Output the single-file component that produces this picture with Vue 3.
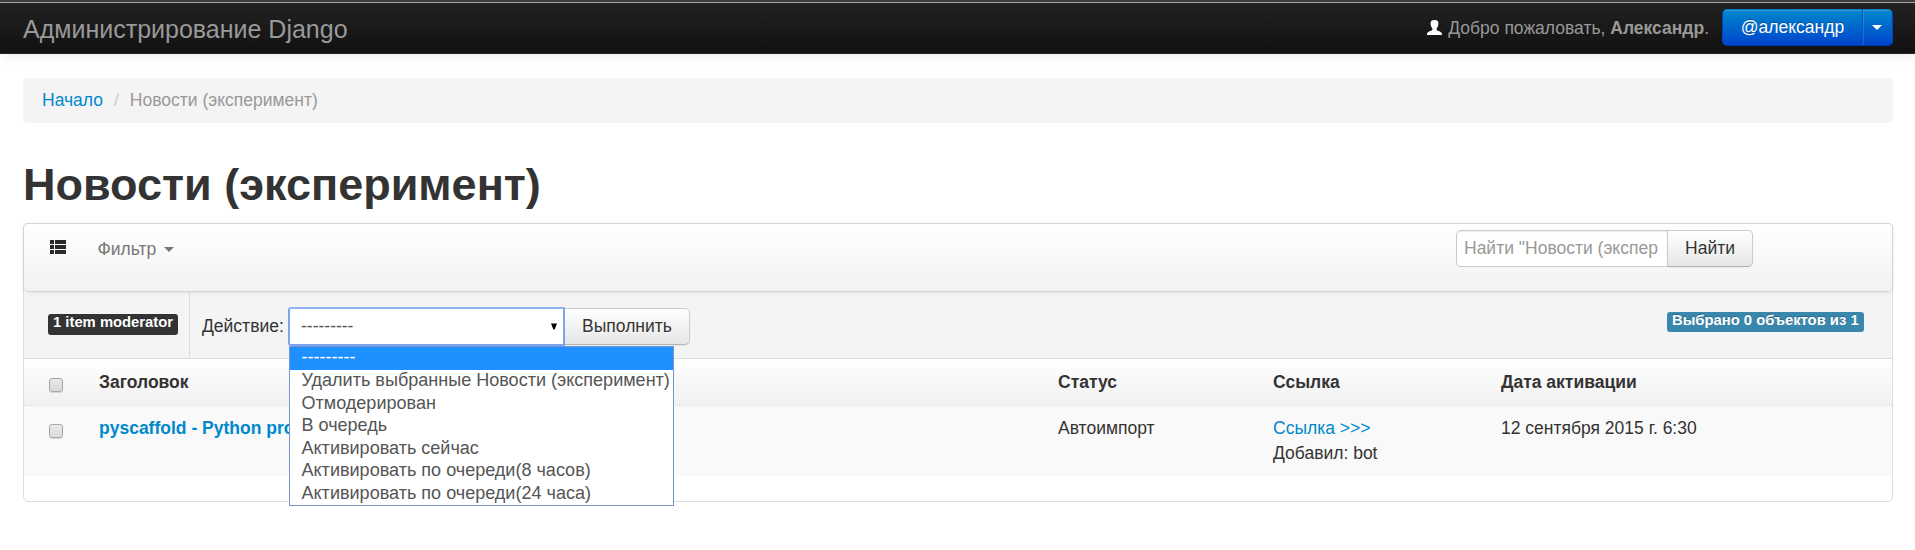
<script setup>
const options = [
  '---------',
  'Удалить выбранные Новости (эксперимент)',
  'Отмодерирован',
  'В очередь',
  'Активировать сейчас',
  'Активировать по очереди(8 часов)',
  'Активировать по очереди(24 часа)',
]
</script>

<template>
  <div class="page">
    <header class="topbar">
      <a class="brand">Администрирование Django</a>
      <div class="welcome">
        <svg class="user" width="15" height="15" viewBox="0 0 15 15"><path d="M7.5 0C10.6 0 11.7 1.6 11.4 4.2C11.2 6.2 10.4 7.5 9.6 8.4V9.8C10.2 11 12.8 11.2 14 12.2C14.8 12.8 15 13.6 15 15H0C0 13.6.2 12.8 1 12.2C2.2 11.2 4.8 11 5.4 9.8V8.4C4.6 7.5 3.8 6.2 3.6 4.2C3.3 1.6 4.4 0 7.5 0Z" fill="#fff"/></svg>
        <span>Добро пожаловать, <strong>Александр</strong>.</span>
      </div>
      <div class="account">
        <button class="primary name">@александр</button>
        <button class="primary toggle"><i class="caret"></i></button>
      </div>
    </header>

    <nav class="crumbs"><a>Начало</a><i>/</i><span>Новости (эксперимент)</span></nav>
    <h1>Новости (эксперимент)</h1>

    <section class="panel">
      <div class="filterbar">
        <svg class="list" width="16" height="14" viewBox="0 0 16 14"><path d="M0 0H4V4H0ZM5 0H16V4H5ZM0 5H4V9H0ZM5 5H16V9H5ZM0 10H4V14H0ZM5 10H16V14H5Z" fill="#2b292c"/></svg>
        <span class="filter">Фильтр<i class="caret"></i></span>
        <form class="search" @submit.prevent>
          <div class="field">Найти "Новости (экспер</div>
          <button class="btn" type="button">Найти</button>
        </form>
      </div>

      <div class="actions">
        <div class="moderator"><span class="badge dark">1 item moderator</span></div>
        <label>Действие:</label>
        <div class="select">
          <span>---------</span>
          <svg width="6" height="7" viewBox="0 0 6 7"><path d="M0 .5H6L3.6 6.5H2.4Z" fill="#000"/></svg>
          <ul class="menu">
            <li v-for="(o, i) in options" :key="o" :class="{ active: i === 0 }">{{ o }}</li>
          </ul>
        </div>
        <button class="btn run">Выполнить</button>
        <span class="badge info">Выбрано 0 объектов из 1</span>
      </div>

      <div class="row head">
        <span class="check"></span>
        <span>Заголовок</span><span>Статус</span><span>Ссылка</span><span>Дата активации</span>
      </div>
      <div class="row body">
        <span class="check"></span>
        <a class="title">pyscaffold - Python pro</a>
        <span>Автоимпорт</span>
        <span><a>Ссылка &gt;&gt;&gt;</a><br>Добавил: bot</span>
        <span>12 сентября 2015 г. 6:30</span>
      </div>
    </section>
  </div>
</template>

<style>
body { margin: 0; background: #fff; overflow: hidden; }
</style>

<style scoped>
* { box-sizing: border-box; }
.page { height: 550px; font: 17.5px/25px "Liberation Sans", Arial, sans-serif; color: #333; }
a { color: #0088cc; }
i { font-style: normal; }
button { font: inherit; margin: 0; padding: 0; white-space: nowrap; }
.topbar { height: 54px; display: flex; align-items: flex-start; padding: 0 22px 0 23px; border-top: 2px solid #3e3d39; border-bottom: 1px solid #252525; background: linear-gradient(#a5a5a5 0 1px, #222 1px, #111); box-shadow: 0 1px 12px rgba(0,0,0,.1); color: #999; }
.brand { color: #999; font-size: 25px; line-height: 28px; margin-top: 13px; white-space: nowrap; }
.welcome { margin-left: auto; display: flex; margin-top: 14px; white-space: nowrap; }
.user { margin: 4px 6px 0 0; }
.account { display: flex; margin: 7px 0 0 13px; }
.primary { height: 37px; color: #fff; text-shadow: 0 -1px 0 rgba(0,0,0,.25); border: 1px solid; border-color: #0077c4 #0044c0 #0037a8; background: linear-gradient(#0088cc, #0044cc); box-shadow: inset 0 1px 0 rgba(255,255,255,.2); }
.name { width: 140px; border-right: 0; border-radius: 5px 0 0 5px; }
.toggle { width: 31px; border-radius: 0 5px 5px 0; border-left-color: #0055cc; box-shadow: inset 1px 0 0 rgba(255,255,255,.13), inset 0 1px 0 rgba(255,255,255,.2); }
.caret { display: inline-block; border: 5px solid transparent; border-top-color: #777; border-bottom: 0; }
.toggle .caret { border-top-color: #fff; vertical-align: 3px; margin-right: 1px; }
.crumbs { margin: 24px 22px 0 23px; height: 45px; padding: 10px 18px 0 19px; background: #f4f4f4; border-radius: 5px; color: #999; }
.crumbs i { color: #ccc; margin: 0 11px; }
h1 { margin: 37px 22px 0 23px; height: 63px; font-size: 45px; line-height: 50px; }
.panel { margin: 0 22px 0 23px; height: 279px; border: 1px solid #ddd; border-radius: 5px; }
.filterbar { position: relative; margin: -1px -1px 0; height: 69px; border: 1px solid #d4d4d4; border-radius: 5px; background: linear-gradient(#fff, #f2f2f2); box-shadow: 0 1px 4px rgba(0,0,0,.065); display: flex; padding: 6px 139px 0 26px; }
.list { margin-top: 10px; }
.filter { margin: 7px 0 0 31.5px; color: #777; }
.filter .caret { margin-left: 7.5px; vertical-align: 3px; }
.search { display: flex; margin-left: auto; }
.field { width: 211px; height: 37px; border: 1px solid #ccc; border-right: 0; border-radius: 5px 0 0 5px; background: #fff; color: #999; padding: 5px 7px; white-space: nowrap; overflow: hidden; box-shadow: inset 0 1px 1px rgba(0,0,0,.075); }
.btn { height: 37px; width: 86px; border: 1px solid #ccc; border-bottom-color: #b3b3b3; border-radius: 0 5px 5px 0; color: #333; background: linear-gradient(#fff, #e6e6e6); text-shadow: 0 1px 1px rgba(255,255,255,.75); box-shadow: inset 0 1px 0 rgba(255,255,255,.2), 0 1px 2px rgba(0,0,0,.05); }
.actions { height: 67px; display: flex; align-items: flex-start; background: #f4f4f4; border-bottom: 1px solid #ddd; padding-right: 28px; }
.moderator { width: 166px; height: 66px; border-right: 1px solid #ddd; padding: 22px 0 0 24px; }
.badge { display: block; color: #fff; font-weight: 700; font-size: 14.8px; line-height: 17px; height: 21px; padding: 0 5px; border-radius: 3px; white-space: nowrap; text-shadow: 0 -1px 0 rgba(0,0,0,.25); }
.dark { background: #333; width: 130px; }
.info { background: #3a87ad; margin: 20px 0 0 auto; height: 20px; width: 197px; }
label { margin: 22px 0 0 12px; width: 86px; white-space: nowrap; }
.select { position: relative; width: 277px; height: 39px; margin-top: 15px; border: 2px solid #7ca4ec; border-top-color: #8fb3f0; border-radius: 3px 0 0 3px; background: #fff; color: #555; display: flex; align-items: center; justify-content: space-between; padding: 0 6px 0 11px; z-index: 2; }
.menu { position: absolute; left: -1px; top: 37px; width: 385px; height: 160px; margin: 0; padding: 0; list-style: none; border: 1px solid #7895d2; background: #fff; font-size: 18.05px; line-height: 20.4px; color: #555; }
.menu li { height: 22.6px; padding-left: 11.5px; white-space: nowrap; }
.menu .active { height: 23px; background: #1e90ff; color: #fff; }
.run { width: 125px; margin-top: 16px; border-left: 0; }
.row { display: grid; grid-template-columns: 75px 959px 215px 228px 1fr; white-space: nowrap; }
.head { height: 47px; padding-top: 11px; font-weight: 700; background: linear-gradient(#fff, #f1f1f1); border-bottom: 1px dotted #d4d4d4; }
.body { height: 70px; padding-top: 10px; background: #f9f9f9; }
.title { font-weight: 700; width: 190px; overflow: hidden; }
.check { width: 14px; height: 14px; margin: 8px 0 0 25px; border: 1px solid #a9a9a9; border-radius: 3px; background: linear-gradient(#e9e9e9, #dadada); box-shadow: 0 1px 1px rgba(0,0,0,.15); }
</style>
